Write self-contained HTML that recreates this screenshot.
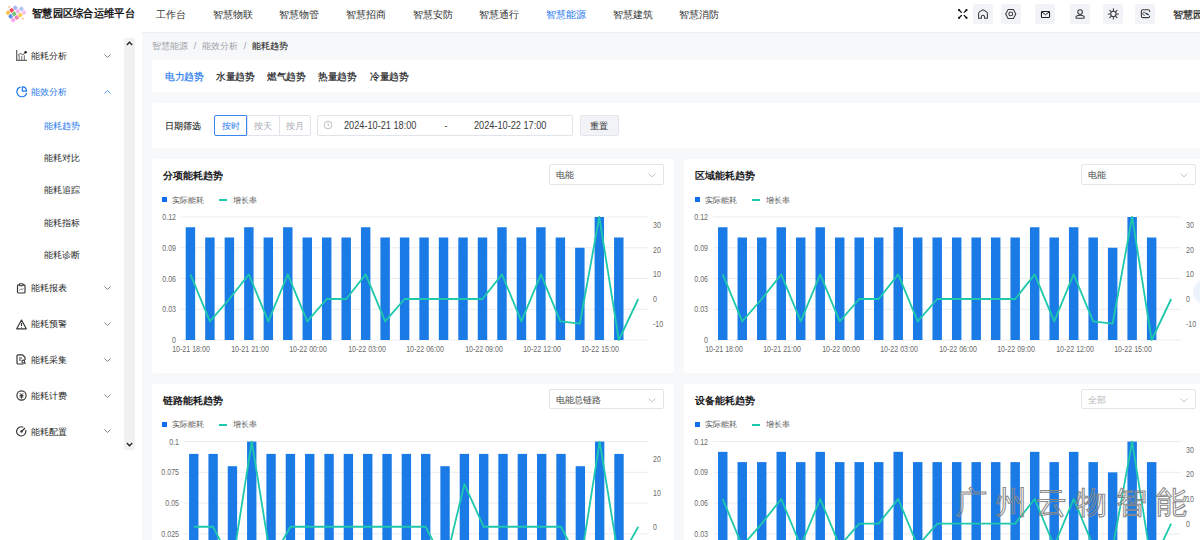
<!DOCTYPE html><html><head><meta charset="utf-8"><style>
*{box-sizing:border-box;margin:0;padding:0}
html,body{width:1200px;height:540px;overflow:hidden;background:#fff;font-family:"Liberation Sans", sans-serif;position:relative}
.abs{position:absolute}
.hdr{position:absolute;left:0;top:0;width:1200px;height:32px;background:#fff}
.main{position:absolute;left:142px;top:32px;width:1058px;height:508px;background:#f7f8fa}
.shadow{position:absolute;left:142px;top:32px;width:1058px;height:2px;background:linear-gradient(#e9ebef,#f7f8fa)}
.nav{position:absolute;top:8.6px;font-size:9.8px;line-height:12px;color:#333;white-space:nowrap}
.ibox{position:absolute;top:4px;width:20px;height:20px;background:#f2f3f7;border-radius:3px}

.side{position:absolute;font-size:9px;line-height:10px;color:#262626;white-space:nowrap}
.card{position:absolute;background:#fff;border-radius:3px}
.ctitle{position:absolute;font-size:10.35px;line-height:13px;font-weight:bold;color:#1d1d1f;white-space:nowrap}
.sel{position:absolute;height:20.6px;border:1px solid #e3e5ea;border-radius:2px;background:#fff}
.sel span{position:absolute;left:6px;top:5px;font-size:9px;line-height:10px;color:#444}
.sel.dis{background:#fff}
.sel.dis span{color:#b4b6ba}
.chev{position:absolute;right:7.2px;top:8.3px}
.leg{position:absolute;font-size:8px;line-height:10px;color:#5a5a5a;white-space:nowrap}
.ax{position:absolute;font-size:8.5px;line-height:10px;color:#6b6b6b;white-space:nowrap;transform:scaleX(0.83);transform-origin:0 50%}
.axl{width:60px;text-align:right;transform-origin:100% 50%}
.axc{width:60px;text-align:center;transform-origin:50% 50%}
</style></head><body>
<div class="hdr"></div>
<svg class="abs" style="left:0;top:0" width="30" height="30" viewBox="0 0 30 30"><g transform="translate(14.2 13.9) rotate(-35)"><rect x="-6.300000000000001" y="-6.300000000000001" width="3.8" height="3.8" rx="0.9" fill="#f8c24e"/><rect x="-1.9" y="-6.300000000000001" width="3.8" height="3.8" rx="0.9" fill="#f0505e"/><rect x="2.5000000000000004" y="-6.300000000000001" width="3.8" height="3.8" rx="0.9" fill="#a9b4f0"/><rect x="-6.300000000000001" y="-1.9" width="3.8" height="3.8" rx="0.9" fill="#5f8ee6"/><rect x="-1.9" y="-1.9" width="3.8" height="3.8" rx="0.9" fill="#72c672"/><rect x="2.5000000000000004" y="-1.9" width="3.8" height="3.8" rx="0.9" fill="#f2b0ee"/><rect x="-6.300000000000001" y="2.5000000000000004" width="3.8" height="3.8" rx="0.9" fill="#f6a9ea"/><rect x="-1.9" y="2.5000000000000004" width="3.8" height="3.8" rx="0.9" fill="#ef84b4"/><rect x="2.5000000000000004" y="2.5000000000000004" width="3.8" height="3.8" rx="0.9" fill="#f7cc55"/><rect x="6.9" y="-1.9" width="3.8" height="3.8" rx="0.9" fill="#b0c4f2"/><rect x="6.9" y="2.5000000000000004" width="3.8" height="3.8" rx="0.9" fill="#f6c0f0"/><circle cx="0" cy="-8.6" r="1" fill="#f6c48a"/><circle cx="4.4" cy="8.8" r="1" fill="#f6c48a"/></g></svg>
<div class="abs" style="left:32px;top:7px;font-size:11px;line-height:12px;font-weight:bold;color:#1a1a1a;white-space:nowrap;transform:scaleX(0.935);transform-origin:0 0">智慧园区综合运维平台</div>
<div class="nav" style="left:156.0px;color:#333">工作台</div>
<div class="nav" style="left:212.7px;color:#333">智慧物联</div>
<div class="nav" style="left:279.2px;color:#333">智慧物管</div>
<div class="nav" style="left:346.0px;color:#333">智慧招商</div>
<div class="nav" style="left:412.7px;color:#333">智慧安防</div>
<div class="nav" style="left:479.2px;color:#333">智慧通行</div>
<div class="nav" style="left:546.0px;color:#1f78ee">智慧能源</div>
<div class="nav" style="left:612.7px;color:#333">智慧建筑</div>
<div class="nav" style="left:679.2px;color:#333">智慧消防</div>
<div class="ibox" style="left:972.6px"></div>
<div class="ibox" style="left:1001px"></div>
<div class="ibox" style="left:1035.3px"></div>
<div class="ibox" style="left:1070px"></div>
<div class="ibox" style="left:1103px"></div>
<div class="ibox" style="left:1135.2px"></div>
<svg class="abs" style="left:0;top:0" width="1200" height="32" viewBox="0 0 1200 32"><g stroke="#111" stroke-width="1.3" stroke-linecap="round" fill="none"><path d="M959 10 L961.4 12.4 M966.6 10 L964.2 12.4 M959 17.9 L961.4 15.5 M966.6 17.9 L964.2 15.5"/></g><g fill="#111"><circle cx="959.1" cy="10.1" r="1.1"/><circle cx="966.5" cy="10.1" r="1.1"/><circle cx="959.1" cy="17.8" r="1.1"/><circle cx="966.5" cy="17.8" r="1.1"/></g><path d="M978.6 18.3 V13.6 Q978.6 12.6 979.5 11.9 L982.3 10.1 Q983 9.7 983.7 10.1 L986.5 11.9 Q987.4 12.6 987.4 13.6 V18.3 H984.6 V16.9 A1.6 1.6 0 0 0 981.4 16.9 V18.3 Z" fill="none" stroke="#3a3a3a" stroke-width="1.05" stroke-linejoin="round"/><path d="M1005.7 13.9 L1008.1 9.4 H1013.4 L1015.8 13.9 L1013.4 18.4 H1008.1 Z" fill="none" stroke="#3a3a3a" stroke-width="1.05" stroke-linejoin="round"/><circle cx="1010.75" cy="13.9" r="1.9" fill="none" stroke="#3a3a3a" stroke-width="1.05"/><rect x="1041.45" y="11.55" width="8.1" height="6" rx="0.9" fill="none" stroke="#222" stroke-width="1.1"/><path d="M1041.7 11.9 L1045.5 14.7 L1049.3 11.9" fill="none" stroke="#222" stroke-width="1"/><circle cx="1080.1" cy="12.1" r="2.3" fill="none" stroke="#3a3a3a" stroke-width="1.05"/><path d="M1075.9 17.6 C1075.9 15.9 1077.8 15.3 1080.1 15.3 C1082.4 15.3 1084.3 15.9 1084.3 17.6 C1084.3 18.2 1083.9 18.3 1083.3 18.3 H1076.9 C1076.3 18.3 1075.9 18.2 1075.9 17.6 Z" fill="none" stroke="#3a3a3a" stroke-width="1.05" stroke-linejoin="round"/><circle cx="1113.4" cy="14" r="2.7" fill="none" stroke="#3a3a3a" stroke-width="1.1"/><path d="M1117.00 14.00 L1118.50 14.00 M1115.95 16.55 L1117.01 17.61 M1113.40 17.60 L1113.40 19.10 M1110.85 16.55 L1109.79 17.61 M1109.80 14.00 L1108.30 14.00 M1110.85 11.45 L1109.79 10.39 M1113.40 10.40 L1113.40 8.90 M1115.95 11.45 L1117.01 10.39 " stroke="#3a3a3a" stroke-width="1.1" stroke-linecap="round"/><path d="M1149.6 12 V11.2 Q1149.6 9.8 1148.2 9.8 H1142.8 Q1141.4 9.8 1141.4 11.2 V16.2 Q1141.4 17.6 1142.8 17.6 H1148.2 Q1149.6 17.6 1149.6 16.2 V15.8" fill="none" stroke="#3a3a3a" stroke-width="1.1"/><path d="M1144.9 12.4 A1.5 1.5 0 1 0 1144.9 15.1" fill="none" stroke="#3a3a3a" stroke-width="0.9"/><path d="M1145.8 13.2 L1148.2 14.6" stroke="#1a2a4a" stroke-width="1.3" stroke-linecap="round"/></svg>
<div class="nav" style="left:1172.5px;top:9px;font-size:9.5px;color:#1a1a1a;-webkit-text-stroke:0.2px #1a1a1a">智慧园区</div>
<svg class="abs" style="left:16px;top:50.449999999999996px" width="12" height="12" viewBox="0 0 12 12"><path d="M0.7 0 V10.3 H11" fill="none" stroke="#666" stroke-width="1.3"/><path d="M3.2 10 V5.3 M5.7 10 V6 M8.4 10 V5.2" stroke="#888" stroke-width="1.2"/><path d="M2 5.3 L4.4 3.4 L6.8 4.8 L9.6 2.3" fill="none" stroke="#555" stroke-width="1"/><circle cx="9.6" cy="2.3" r="1.2" fill="#222"/></svg>
<div class="side" style="left:31px;top:51.05px;color:#262626">能耗分析</div>
<svg class="abs" style="left:104.3px;top:53.75px" width="7" height="4" viewBox="0 0 7 4"><path d="M0.5 0.5 L3.5 3.5 L6.5 0.5" fill="none" stroke="#777" stroke-width="0.9"/></svg>
<svg class="abs" style="left:16px;top:86.30000000000001px" width="12" height="12" viewBox="0 0 12 12"><path d="M4.6 1.1 A4.9 4.9 0 1 0 10.6 6.9" fill="none" stroke="#1f78ee" stroke-width="1.2"/><path d="M6.3 0.9 V5.1 H10.6 A4.4 4.4 0 0 0 6.3 0.9 Z" fill="none" stroke="#1f78ee" stroke-width="1.2" stroke-linejoin="round"/></svg>
<div class="side" style="left:31px;top:86.9px;color:#1f78ee">能效分析</div>
<svg class="abs" style="left:104.3px;top:89.60000000000001px" width="7" height="4" viewBox="0 0 7 4"><path d="M0.5 3.5 L3.5 0.5 L6.5 3.5" fill="none" stroke="#4a90f2" stroke-width="0.9"/></svg>
<svg class="abs" style="left:16px;top:282.79999999999995px" width="12" height="12" viewBox="0 0 12 12"><rect x="1.5" y="1.8" width="7.5" height="8.2" rx="1" fill="none" stroke="#333" stroke-width="1.15"/><rect x="3.5" y="0.7" width="3.5" height="2" rx="0.5" fill="#fff" stroke="#333" stroke-width="1.05"/><path d="M3.5 7.5 L5 5.8 L6.2 6.8 L7.3 5.3" fill="none" stroke="#666" stroke-width="0.8"/></svg>
<div class="side" style="left:31px;top:283.4px;color:#262626">能耗报表</div>
<svg class="abs" style="left:104.3px;top:286.09999999999997px" width="7" height="4" viewBox="0 0 7 4"><path d="M0.5 0.5 L3.5 3.5 L6.5 0.5" fill="none" stroke="#777" stroke-width="0.9"/></svg>
<svg class="abs" style="left:16px;top:318.59999999999997px" width="12" height="12" viewBox="0 0 12 12"><path d="M5.5 1 L10.3 9.8 H0.7 Z" fill="none" stroke="#333" stroke-width="1.15" stroke-linejoin="round"/><path d="M5.5 4 V7" stroke="#333" stroke-width="1.15"/><circle cx="5.5" cy="8.3" r="0.5" fill="#333"/></svg>
<div class="side" style="left:31px;top:319.2px;color:#262626">能耗预警</div>
<svg class="abs" style="left:104.3px;top:321.9px" width="7" height="4" viewBox="0 0 7 4"><path d="M0.5 0.5 L3.5 3.5 L6.5 0.5" fill="none" stroke="#777" stroke-width="0.9"/></svg>
<svg class="abs" style="left:16px;top:354.4px" width="12" height="12" viewBox="0 0 12 12"><path d="M7.5 10 H2 a1 1 0 0 1 -1 -1 V1.8 a1 1 0 0 1 1 -1 H6.5 L9 3.3 V6" fill="none" stroke="#333" stroke-width="1.15"/><path d="M3 4 H6 M3 6 H5" stroke="#333" stroke-width="1"/><circle cx="7.3" cy="7.5" r="1.4" fill="none" stroke="#333" stroke-width="1.05"/><path d="M8.3 8.5 L9.6 9.8" stroke="#333" stroke-width="1.15"/></svg>
<div class="side" style="left:31px;top:355.0px;color:#262626">能耗采集</div>
<svg class="abs" style="left:104.3px;top:357.7px" width="7" height="4" viewBox="0 0 7 4"><path d="M0.5 0.5 L3.5 3.5 L6.5 0.5" fill="none" stroke="#777" stroke-width="0.9"/></svg>
<svg class="abs" style="left:16px;top:390.2px" width="12" height="12" viewBox="0 0 12 12"><circle cx="5.5" cy="5.5" r="4.6" fill="none" stroke="#333" stroke-width="1.15"/><path d="M3.8 3.2 L5.5 5 L7.2 3.2 M3.6 5.4 H7.4 M3.6 6.9 H7.4 M5.5 5 V8.6" fill="none" stroke="#333" stroke-width="1"/></svg>
<div class="side" style="left:31px;top:390.8px;color:#262626">能耗计费</div>
<svg class="abs" style="left:104.3px;top:393.5px" width="7" height="4" viewBox="0 0 7 4"><path d="M0.5 0.5 L3.5 3.5 L6.5 0.5" fill="none" stroke="#777" stroke-width="0.9"/></svg>
<svg class="abs" style="left:16px;top:426.0px" width="12" height="12" viewBox="0 0 12 12"><path d="M9.6 4 A4.6 4.6 0 1 1 7.3 1.3" fill="none" stroke="#333" stroke-width="1.15"/><path d="M5.5 5.5 L9 2" stroke="#333" stroke-width="1.15"/><circle cx="5.5" cy="5.5" r="1.2" fill="#333"/></svg>
<div class="side" style="left:31px;top:426.6px;color:#262626">能耗配置</div>
<svg class="abs" style="left:104.3px;top:429.3px" width="7" height="4" viewBox="0 0 7 4"><path d="M0.5 0.5 L3.5 3.5 L6.5 0.5" fill="none" stroke="#777" stroke-width="0.9"/></svg>
<div class="side" style="left:44.4px;top:120.9px;color:#1f78ee">能耗趋势</div>
<div class="side" style="left:44.4px;top:153.1px;color:#262626">能耗对比</div>
<div class="side" style="left:44.4px;top:185.3px;color:#262626">能耗追踪</div>
<div class="side" style="left:44.4px;top:217.5px;color:#262626">能耗指标</div>
<div class="side" style="left:44.4px;top:249.7px;color:#262626">能耗诊断</div>
<div class="abs" style="left:124.4px;top:38.3px;width:10.4px;height:411.5px;background:#f1f1f1"></div>
<svg class="abs" style="left:126px;top:40.7px" width="7" height="5" viewBox="0 0 7 5"><path d="M0.8 4 L3.5 1.2 L6.2 4" fill="none" stroke="#222" stroke-width="1.3"/></svg>
<svg class="abs" style="left:126px;top:441.5px" width="7" height="5" viewBox="0 0 7 5"><path d="M0.8 1 L3.5 3.8 L6.2 1" fill="none" stroke="#222" stroke-width="1.3"/></svg>
<div class="main"></div><div class="shadow"></div>
<div class="abs" style="left:152px;top:41px;font-size:9px;line-height:10px;color:#9a9ea6;white-space:nowrap">智慧能源<span style="margin:0 5.6px 0 5.8px">/</span>能效分析<span style="margin:0 5.6px 0 5.8px">/</span><span style="color:#222;-webkit-text-stroke:0.1px #222">能耗趋势</span></div>
<div class="card" style="left:151.5px;top:60.2px;width:1055px;height:32px"></div>
<div class="abs" style="left:164.5px;top:71px;font-size:10px;line-height:12px;color:#1f78ee;-webkit-text-stroke:0.2px #1f78ee;transform:scaleX(0.965);transform-origin:0 0;white-space:nowrap">电力趋势</div>
<div class="abs" style="left:215.75px;top:71px;font-size:10px;line-height:12px;color:#1d1d1f;-webkit-text-stroke:0.2px #1d1d1f;transform:scaleX(0.965);transform-origin:0 0;white-space:nowrap">水量趋势</div>
<div class="abs" style="left:267.0px;top:71px;font-size:10px;line-height:12px;color:#1d1d1f;-webkit-text-stroke:0.2px #1d1d1f;transform:scaleX(0.965);transform-origin:0 0;white-space:nowrap">燃气趋势</div>
<div class="abs" style="left:318.25px;top:71px;font-size:10px;line-height:12px;color:#1d1d1f;-webkit-text-stroke:0.2px #1d1d1f;transform:scaleX(0.965);transform-origin:0 0;white-space:nowrap">热量趋势</div>
<div class="abs" style="left:369.5px;top:71px;font-size:10px;line-height:12px;color:#1d1d1f;-webkit-text-stroke:0.2px #1d1d1f;transform:scaleX(0.965);transform-origin:0 0;white-space:nowrap">冷量趋势</div>
<div class="card" style="left:151.5px;top:102.5px;width:1055px;height:45.5px"></div>
<div class="abs" style="left:164.8px;top:120.8px;font-size:9px;line-height:10px;color:#222;-webkit-text-stroke:0.12px #222;white-space:nowrap">日期筛选</div>
<div class="abs" style="left:247px;top:115.2px;width:63.5px;height:20.5px;border:1px solid #e1e4ea;border-radius:0 2px 2px 0"></div>
<div class="abs" style="left:278.5px;top:115.2px;width:1px;height:20.5px;background:#e1e4ea"></div>
<div class="abs" style="left:214.3px;top:115.2px;width:32.9px;height:20.5px;border:1px solid #3a85f0;border-radius:2px 0 0 2px"></div>
<div class="abs" style="left:222px;top:120.5px;font-size:9px;line-height:10px;color:#1f78ee;white-space:nowrap">按时</div>
<div class="abs" style="left:254px;top:120.5px;font-size:9px;line-height:10px;color:#a8acb3;white-space:nowrap">按天</div>
<div class="abs" style="left:285.5px;top:120.5px;font-size:9px;line-height:10px;color:#a8acb3;white-space:nowrap">按月</div>
<div class="abs" style="left:317.3px;top:115.1px;width:256px;height:20.6px;border:1px solid #e1e4ea;border-radius:2px"></div>
<svg class="abs" style="left:323px;top:120px" width="10" height="10" viewBox="0 0 10 10"><circle cx="5" cy="5" r="3.8" fill="none" stroke="#b5b9c0" stroke-width="0.9"/><path d="M5 2.8 V5 L6.5 6.2" fill="none" stroke="#b5b9c0" stroke-width="0.9"/></svg>
<div class="abs" style="left:344.2px;top:121px;font-size:10.2px;line-height:10px;color:#3a3a3a;white-space:nowrap;transform:scaleX(0.9);transform-origin:0 50%">2024-10-21 18:00</div>
<div class="abs" style="left:444.5px;top:121px;font-size:9.3px;line-height:10px;color:#333;white-space:nowrap">-</div>
<div class="abs" style="left:474.1px;top:121px;font-size:10.2px;line-height:10px;color:#3a3a3a;white-space:nowrap;transform:scaleX(0.9);transform-origin:0 50%">2024-10-22 17:00</div>
<div class="abs" style="left:580px;top:115.1px;width:38.5px;height:20.6px;border:1px solid #e4e6ec;border-radius:2px;background:#f2f3f7"></div>
<div class="abs" style="left:590px;top:121.2px;font-size:9px;line-height:10px;color:#333;white-space:nowrap">重置</div>
<div class="card" style="left:151.5px;top:158.9px;width:522.5px;height:214px"></div>
<div class="ctitle" style="left:162.5px;top:168.9px">分项能耗趋势</div>
<div class="sel" style="left:548.9px;top:164.0px;width:115.2px"><span>电能</span><svg class="chev" width="8" height="5" viewBox="0 0 8 5"><path d="M0.6 0.6 L4 3.9 L7.4 0.6" fill="none" stroke="#b8bcc4" stroke-width="0.9"/></svg></div>
<div style="position:absolute;left:162.1px;top:197.10000000000002px;width:5px;height:5px;background:#0d6ef0"></div>
<div class="leg" style="left:172.3px;top:195.8px">实际能耗</div>
<div style="position:absolute;left:219.0px;top:198.9px;width:8px;height:2px;background:#1ec8ac"></div>
<div class="leg" style="left:232.9px;top:195.8px">增长率</div>
<svg style="position:absolute;left:0;top:0" width="1200" height="540" viewBox="0 0 1200 540"><line x1="180.7" y1="217.00" x2="648.0" y2="217.00" stroke="#ececf0" stroke-width="1"/><line x1="180.7" y1="247.75" x2="648.0" y2="247.75" stroke="#ececf0" stroke-width="1"/><line x1="180.7" y1="278.50" x2="648.0" y2="278.50" stroke="#ececf0" stroke-width="1"/><line x1="180.7" y1="309.25" x2="648.0" y2="309.25" stroke="#ececf0" stroke-width="1"/><line x1="180.7" y1="340.00" x2="648.0" y2="340.00" stroke="#ececf0" stroke-width="1"/><rect x="185.71" y="227.25" width="9.44" height="112.75" fill="#1a7be6"/><rect x="205.18" y="237.50" width="9.44" height="102.50" fill="#1a7be6"/><rect x="224.66" y="237.50" width="9.44" height="102.50" fill="#1a7be6"/><rect x="244.13" y="227.25" width="9.44" height="112.75" fill="#1a7be6"/><rect x="263.60" y="237.50" width="9.44" height="102.50" fill="#1a7be6"/><rect x="283.07" y="227.25" width="9.44" height="112.75" fill="#1a7be6"/><rect x="302.54" y="237.50" width="9.44" height="102.50" fill="#1a7be6"/><rect x="322.01" y="237.50" width="9.44" height="102.50" fill="#1a7be6"/><rect x="341.48" y="237.50" width="9.44" height="102.50" fill="#1a7be6"/><rect x="360.95" y="227.25" width="9.44" height="112.75" fill="#1a7be6"/><rect x="380.42" y="237.50" width="9.44" height="102.50" fill="#1a7be6"/><rect x="399.89" y="237.50" width="9.44" height="102.50" fill="#1a7be6"/><rect x="419.36" y="237.50" width="9.44" height="102.50" fill="#1a7be6"/><rect x="438.83" y="237.50" width="9.44" height="102.50" fill="#1a7be6"/><rect x="458.31" y="237.50" width="9.44" height="102.50" fill="#1a7be6"/><rect x="477.78" y="237.50" width="9.44" height="102.50" fill="#1a7be6"/><rect x="497.25" y="227.25" width="9.44" height="112.75" fill="#1a7be6"/><rect x="516.72" y="237.50" width="9.44" height="102.50" fill="#1a7be6"/><rect x="536.19" y="227.25" width="9.44" height="112.75" fill="#1a7be6"/><rect x="555.66" y="237.50" width="9.44" height="102.50" fill="#1a7be6"/><rect x="575.13" y="247.75" width="9.44" height="92.25" fill="#1a7be6"/><rect x="594.60" y="217.00" width="9.44" height="123.00" fill="#1a7be6"/><rect x="614.07" y="237.50" width="9.44" height="102.50" fill="#1a7be6"/><polyline points="190.44,274.39 209.91,321.35 229.38,298.99 248.85,274.39 268.32,321.35 287.79,274.39 307.26,321.35 326.73,298.99 346.20,298.99 365.67,274.39 385.14,321.35 404.61,298.99 424.09,298.99 443.56,298.99 463.03,298.99 482.50,298.99 501.97,274.39 521.44,321.35 540.91,274.39 560.38,321.35 579.85,323.59 599.32,217.00 618.79,340.00 638.26,298.99" fill="none" stroke="#1ec8ac" stroke-width="1.8" stroke-linejoin="round"/></svg>
<div class="ax axl" style="left:115.69999999999999px;top:335.00px">0</div>
<div class="ax axl" style="left:115.69999999999999px;top:304.25px">0.03</div>
<div class="ax axl" style="left:115.69999999999999px;top:273.50px">0.06</div>
<div class="ax axl" style="left:115.69999999999999px;top:242.75px">0.09</div>
<div class="ax axl" style="left:115.69999999999999px;top:212.00px">0.12</div>
<div class="ax" style="left:653.3px;top:318.59px">-10</div>
<div class="ax" style="left:653.3px;top:293.99px">0</div>
<div class="ax" style="left:653.3px;top:269.39px">10</div>
<div class="ax" style="left:653.3px;top:244.79px">20</div>
<div class="ax" style="left:653.3px;top:220.19px">30</div>
<div class="ax axc" style="left:161.44px;top:344.20px">10-21 18:00</div>
<div class="ax axc" style="left:219.85px;top:344.20px">10-21 21:00</div>
<div class="ax axc" style="left:278.26px;top:344.20px">10-22 00:00</div>
<div class="ax axc" style="left:336.67px;top:344.20px">10-22 03:00</div>
<div class="ax axc" style="left:395.09px;top:344.20px">10-22 06:00</div>
<div class="ax axc" style="left:453.50px;top:344.20px">10-22 09:00</div>
<div class="ax axc" style="left:511.91px;top:344.20px">10-22 12:00</div>
<div class="ax axc" style="left:570.32px;top:344.20px">10-22 15:00</div>
<div class="card" style="left:684.4px;top:158.9px;width:522.5px;height:214px"></div>
<div class="ctitle" style="left:695.4px;top:168.9px">区域能耗趋势</div>
<div class="sel" style="left:1080.8px;top:164.0px;width:115.6px"><span>电能</span><svg class="chev" width="8" height="5" viewBox="0 0 8 5"><path d="M0.6 0.6 L4 3.9 L7.4 0.6" fill="none" stroke="#b8bcc4" stroke-width="0.9"/></svg></div>
<div style="position:absolute;left:695.0px;top:197.10000000000002px;width:5px;height:5px;background:#0d6ef0"></div>
<div class="leg" style="left:705.1999999999999px;top:195.8px">实际能耗</div>
<div style="position:absolute;left:751.9px;top:198.9px;width:8px;height:2px;background:#1ec8ac"></div>
<div class="leg" style="left:765.8px;top:195.8px">增长率</div>
<svg style="position:absolute;left:0;top:0" width="1200" height="540" viewBox="0 0 1200 540"><line x1="713.0" y1="217.00" x2="1180.9" y2="217.00" stroke="#ececf0" stroke-width="1"/><line x1="713.0" y1="247.75" x2="1180.9" y2="247.75" stroke="#ececf0" stroke-width="1"/><line x1="713.0" y1="278.50" x2="1180.9" y2="278.50" stroke="#ececf0" stroke-width="1"/><line x1="713.0" y1="309.25" x2="1180.9" y2="309.25" stroke="#ececf0" stroke-width="1"/><line x1="713.0" y1="340.00" x2="1180.9" y2="340.00" stroke="#ececf0" stroke-width="1"/><rect x="718.02" y="227.25" width="9.46" height="112.75" fill="#1a7be6"/><rect x="737.52" y="237.50" width="9.46" height="102.50" fill="#1a7be6"/><rect x="757.01" y="237.50" width="9.46" height="102.50" fill="#1a7be6"/><rect x="776.51" y="227.25" width="9.46" height="112.75" fill="#1a7be6"/><rect x="796.00" y="237.50" width="9.46" height="102.50" fill="#1a7be6"/><rect x="815.50" y="227.25" width="9.46" height="112.75" fill="#1a7be6"/><rect x="835.00" y="237.50" width="9.46" height="102.50" fill="#1a7be6"/><rect x="854.49" y="237.50" width="9.46" height="102.50" fill="#1a7be6"/><rect x="873.99" y="237.50" width="9.46" height="102.50" fill="#1a7be6"/><rect x="893.48" y="227.25" width="9.46" height="112.75" fill="#1a7be6"/><rect x="912.98" y="237.50" width="9.46" height="102.50" fill="#1a7be6"/><rect x="932.47" y="237.50" width="9.46" height="102.50" fill="#1a7be6"/><rect x="951.97" y="237.50" width="9.46" height="102.50" fill="#1a7be6"/><rect x="971.47" y="237.50" width="9.46" height="102.50" fill="#1a7be6"/><rect x="990.96" y="237.50" width="9.46" height="102.50" fill="#1a7be6"/><rect x="1010.46" y="237.50" width="9.46" height="102.50" fill="#1a7be6"/><rect x="1029.95" y="227.25" width="9.46" height="112.75" fill="#1a7be6"/><rect x="1049.45" y="237.50" width="9.46" height="102.50" fill="#1a7be6"/><rect x="1068.95" y="227.25" width="9.46" height="112.75" fill="#1a7be6"/><rect x="1088.44" y="237.50" width="9.46" height="102.50" fill="#1a7be6"/><rect x="1107.94" y="247.75" width="9.46" height="92.25" fill="#1a7be6"/><rect x="1127.43" y="217.00" width="9.46" height="123.00" fill="#1a7be6"/><rect x="1146.93" y="237.50" width="9.46" height="102.50" fill="#1a7be6"/><polyline points="722.75,274.39 742.24,321.35 761.74,298.99 781.24,274.39 800.73,321.35 820.23,274.39 839.72,321.35 859.22,298.99 878.71,298.99 898.21,274.39 917.71,321.35 937.20,298.99 956.70,298.99 976.19,298.99 995.69,298.99 1015.19,298.99 1034.68,274.39 1054.18,321.35 1073.67,274.39 1093.17,321.35 1112.66,323.59 1132.16,217.00 1151.66,340.00 1171.15,298.99" fill="none" stroke="#1ec8ac" stroke-width="1.8" stroke-linejoin="round"/></svg>
<div class="ax axl" style="left:648.0px;top:335.00px">0</div>
<div class="ax axl" style="left:648.0px;top:304.25px">0.03</div>
<div class="ax axl" style="left:648.0px;top:273.50px">0.06</div>
<div class="ax axl" style="left:648.0px;top:242.75px">0.09</div>
<div class="ax axl" style="left:648.0px;top:212.00px">0.12</div>
<div class="ax" style="left:1186.2px;top:318.59px">-10</div>
<div class="ax" style="left:1186.2px;top:293.99px">0</div>
<div class="ax" style="left:1186.2px;top:269.39px">10</div>
<div class="ax" style="left:1186.2px;top:244.79px">20</div>
<div class="ax" style="left:1186.2px;top:220.19px">30</div>
<div class="ax axc" style="left:693.75px;top:344.20px">10-21 18:00</div>
<div class="ax axc" style="left:752.24px;top:344.20px">10-21 21:00</div>
<div class="ax axc" style="left:810.72px;top:344.20px">10-22 00:00</div>
<div class="ax axc" style="left:869.21px;top:344.20px">10-22 03:00</div>
<div class="ax axc" style="left:927.70px;top:344.20px">10-22 06:00</div>
<div class="ax axc" style="left:986.19px;top:344.20px">10-22 09:00</div>
<div class="ax axc" style="left:1044.67px;top:344.20px">10-22 12:00</div>
<div class="ax axc" style="left:1103.16px;top:344.20px">10-22 15:00</div>
<div class="card" style="left:151.5px;top:383.5px;width:522.5px;height:214px"></div>
<div class="ctitle" style="left:162.5px;top:393.5px">链路能耗趋势</div>
<div class="sel" style="left:548.9px;top:388.6px;width:115.2px"><span>电能总链路</span><svg class="chev" width="8" height="5" viewBox="0 0 8 5"><path d="M0.6 0.6 L4 3.9 L7.4 0.6" fill="none" stroke="#b8bcc4" stroke-width="0.9"/></svg></div>
<div style="position:absolute;left:162.1px;top:421.7px;width:5px;height:5px;background:#0d6ef0"></div>
<div class="leg" style="left:172.3px;top:420.4px">实际能耗</div>
<div style="position:absolute;left:219.0px;top:423.5px;width:8px;height:2px;background:#1ec8ac"></div>
<div class="leg" style="left:232.9px;top:420.4px">增长率</div>
<svg style="position:absolute;left:0;top:0" width="1200" height="540" viewBox="0 0 1200 540"><line x1="184.1" y1="441.60" x2="648.0" y2="441.60" stroke="#ececf0" stroke-width="1"/><line x1="184.1" y1="472.35" x2="648.0" y2="472.35" stroke="#ececf0" stroke-width="1"/><line x1="184.1" y1="503.10" x2="648.0" y2="503.10" stroke="#ececf0" stroke-width="1"/><line x1="184.1" y1="533.85" x2="648.0" y2="533.85" stroke="#ececf0" stroke-width="1"/><line x1="184.1" y1="564.60" x2="648.0" y2="564.60" stroke="#ececf0" stroke-width="1"/><rect x="189.08" y="453.90" width="9.37" height="110.70" fill="#1a7be6"/><rect x="208.41" y="453.90" width="9.37" height="110.70" fill="#1a7be6"/><rect x="227.74" y="466.20" width="9.37" height="98.40" fill="#1a7be6"/><rect x="247.06" y="441.60" width="9.37" height="123.00" fill="#1a7be6"/><rect x="266.39" y="453.90" width="9.37" height="110.70" fill="#1a7be6"/><rect x="285.72" y="453.90" width="9.37" height="110.70" fill="#1a7be6"/><rect x="305.05" y="453.90" width="9.37" height="110.70" fill="#1a7be6"/><rect x="324.38" y="453.90" width="9.37" height="110.70" fill="#1a7be6"/><rect x="343.71" y="453.90" width="9.37" height="110.70" fill="#1a7be6"/><rect x="363.04" y="453.90" width="9.37" height="110.70" fill="#1a7be6"/><rect x="382.37" y="453.90" width="9.37" height="110.70" fill="#1a7be6"/><rect x="401.70" y="453.90" width="9.37" height="110.70" fill="#1a7be6"/><rect x="421.03" y="453.90" width="9.37" height="110.70" fill="#1a7be6"/><rect x="440.36" y="466.20" width="9.37" height="98.40" fill="#1a7be6"/><rect x="459.69" y="453.90" width="9.37" height="110.70" fill="#1a7be6"/><rect x="479.01" y="453.90" width="9.37" height="110.70" fill="#1a7be6"/><rect x="498.34" y="453.90" width="9.37" height="110.70" fill="#1a7be6"/><rect x="517.67" y="453.90" width="9.37" height="110.70" fill="#1a7be6"/><rect x="537.00" y="453.90" width="9.37" height="110.70" fill="#1a7be6"/><rect x="556.33" y="453.90" width="9.37" height="110.70" fill="#1a7be6"/><rect x="575.66" y="466.20" width="9.37" height="98.40" fill="#1a7be6"/><rect x="594.99" y="441.60" width="9.37" height="123.00" fill="#1a7be6"/><rect x="614.32" y="453.90" width="9.37" height="110.70" fill="#1a7be6"/><polyline points="193.76,526.76 213.09,526.76 232.42,564.60 251.75,441.60 271.08,560.82 290.41,526.76 309.74,526.76 329.07,526.76 348.40,526.76 367.73,526.76 387.06,526.76 406.39,526.76 425.71,526.76 445.04,564.60 464.37,484.18 483.70,526.76 503.03,526.76 522.36,526.76 541.69,526.76 561.02,526.76 580.35,564.60 599.68,441.60 619.01,560.82 638.34,526.76" fill="none" stroke="#1ec8ac" stroke-width="1.8" stroke-linejoin="round"/></svg>
<div class="ax axl" style="left:119.1px;top:559.60px">0</div>
<div class="ax axl" style="left:119.1px;top:528.85px">0.025</div>
<div class="ax axl" style="left:119.1px;top:498.10px">0.05</div>
<div class="ax axl" style="left:119.1px;top:467.35px">0.075</div>
<div class="ax axl" style="left:119.1px;top:436.60px">0.1</div>
<div class="ax" style="left:653.3px;top:555.82px">-10</div>
<div class="ax" style="left:653.3px;top:521.76px">0</div>
<div class="ax" style="left:653.3px;top:487.69px">10</div>
<div class="ax" style="left:653.3px;top:453.63px">20</div>
<div class="ax axc" style="left:164.76px;top:568.80px">10-21 18:00</div>
<div class="ax axc" style="left:222.75px;top:568.80px">10-21 21:00</div>
<div class="ax axc" style="left:280.74px;top:568.80px">10-22 00:00</div>
<div class="ax axc" style="left:338.73px;top:568.80px">10-22 03:00</div>
<div class="ax axc" style="left:396.71px;top:568.80px">10-22 06:00</div>
<div class="ax axc" style="left:454.70px;top:568.80px">10-22 09:00</div>
<div class="ax axc" style="left:512.69px;top:568.80px">10-22 12:00</div>
<div class="ax axc" style="left:570.68px;top:568.80px">10-22 15:00</div>
<div class="card" style="left:684.4px;top:383.5px;width:522.5px;height:214px"></div>
<div class="ctitle" style="left:695.4px;top:393.5px">设备能耗趋势</div>
<div class="sel dis" style="left:1080.8px;top:388.6px;width:115.6px"><span>全部</span><svg class="chev" width="8" height="5" viewBox="0 0 8 5"><path d="M0.6 0.6 L4 3.9 L7.4 0.6" fill="none" stroke="#b8bcc4" stroke-width="0.9"/></svg></div>
<div style="position:absolute;left:695.0px;top:421.7px;width:5px;height:5px;background:#0d6ef0"></div>
<div class="leg" style="left:705.1999999999999px;top:420.4px">实际能耗</div>
<div style="position:absolute;left:751.9px;top:423.5px;width:8px;height:2px;background:#1ec8ac"></div>
<div class="leg" style="left:765.8px;top:420.4px">增长率</div>
<svg style="position:absolute;left:0;top:0" width="1200" height="540" viewBox="0 0 1200 540"><line x1="713.0" y1="441.60" x2="1180.9" y2="441.60" stroke="#ececf0" stroke-width="1"/><line x1="713.0" y1="472.35" x2="1180.9" y2="472.35" stroke="#ececf0" stroke-width="1"/><line x1="713.0" y1="503.10" x2="1180.9" y2="503.10" stroke="#ececf0" stroke-width="1"/><line x1="713.0" y1="533.85" x2="1180.9" y2="533.85" stroke="#ececf0" stroke-width="1"/><line x1="713.0" y1="564.60" x2="1180.9" y2="564.60" stroke="#ececf0" stroke-width="1"/><rect x="718.02" y="451.85" width="9.46" height="112.75" fill="#1a7be6"/><rect x="737.52" y="462.10" width="9.46" height="102.50" fill="#1a7be6"/><rect x="757.01" y="462.10" width="9.46" height="102.50" fill="#1a7be6"/><rect x="776.51" y="451.85" width="9.46" height="112.75" fill="#1a7be6"/><rect x="796.00" y="462.10" width="9.46" height="102.50" fill="#1a7be6"/><rect x="815.50" y="451.85" width="9.46" height="112.75" fill="#1a7be6"/><rect x="835.00" y="462.10" width="9.46" height="102.50" fill="#1a7be6"/><rect x="854.49" y="462.10" width="9.46" height="102.50" fill="#1a7be6"/><rect x="873.99" y="462.10" width="9.46" height="102.50" fill="#1a7be6"/><rect x="893.48" y="451.85" width="9.46" height="112.75" fill="#1a7be6"/><rect x="912.98" y="462.10" width="9.46" height="102.50" fill="#1a7be6"/><rect x="932.47" y="462.10" width="9.46" height="102.50" fill="#1a7be6"/><rect x="951.97" y="462.10" width="9.46" height="102.50" fill="#1a7be6"/><rect x="971.47" y="462.10" width="9.46" height="102.50" fill="#1a7be6"/><rect x="990.96" y="462.10" width="9.46" height="102.50" fill="#1a7be6"/><rect x="1010.46" y="462.10" width="9.46" height="102.50" fill="#1a7be6"/><rect x="1029.95" y="451.85" width="9.46" height="112.75" fill="#1a7be6"/><rect x="1049.45" y="462.10" width="9.46" height="102.50" fill="#1a7be6"/><rect x="1068.95" y="451.85" width="9.46" height="112.75" fill="#1a7be6"/><rect x="1088.44" y="462.10" width="9.46" height="102.50" fill="#1a7be6"/><rect x="1107.94" y="472.35" width="9.46" height="92.25" fill="#1a7be6"/><rect x="1127.43" y="441.60" width="9.46" height="123.00" fill="#1a7be6"/><rect x="1146.93" y="462.10" width="9.46" height="102.50" fill="#1a7be6"/><polyline points="722.75,498.99 742.24,545.95 761.74,523.59 781.24,498.99 800.73,545.95 820.23,498.99 839.72,545.95 859.22,523.59 878.71,523.59 898.21,498.99 917.71,545.95 937.20,523.59 956.70,523.59 976.19,523.59 995.69,523.59 1015.19,523.59 1034.68,498.99 1054.18,545.95 1073.67,498.99 1093.17,545.95 1112.66,548.19 1132.16,441.60 1151.66,564.60 1171.15,523.59" fill="none" stroke="#1ec8ac" stroke-width="1.8" stroke-linejoin="round"/></svg>
<div class="ax axl" style="left:648.0px;top:559.60px">0</div>
<div class="ax axl" style="left:648.0px;top:528.85px">0.03</div>
<div class="ax axl" style="left:648.0px;top:498.10px">0.06</div>
<div class="ax axl" style="left:648.0px;top:467.35px">0.09</div>
<div class="ax axl" style="left:648.0px;top:436.60px">0.12</div>
<div class="ax" style="left:1186.2px;top:543.19px">-10</div>
<div class="ax" style="left:1186.2px;top:518.59px">0</div>
<div class="ax" style="left:1186.2px;top:493.99px">10</div>
<div class="ax" style="left:1186.2px;top:469.39px">20</div>
<div class="ax" style="left:1186.2px;top:444.79px">30</div>
<div class="ax axc" style="left:693.75px;top:568.80px">10-21 18:00</div>
<div class="ax axc" style="left:752.24px;top:568.80px">10-21 21:00</div>
<div class="ax axc" style="left:810.72px;top:568.80px">10-22 00:00</div>
<div class="ax axc" style="left:869.21px;top:568.80px">10-22 03:00</div>
<div class="ax axc" style="left:927.70px;top:568.80px">10-22 06:00</div>
<div class="ax axc" style="left:986.19px;top:568.80px">10-22 09:00</div>
<div class="ax axc" style="left:1044.67px;top:568.80px">10-22 12:00</div>
<div class="ax axc" style="left:1103.16px;top:568.80px">10-22 15:00</div>
<div class="abs" style="left:1193px;top:280px;width:24px;height:24px;border-radius:50%;background:#e8f0fb;opacity:0.8"></div>
<div class="abs" style="left:955.5px;top:482.5px;font-size:31px;line-height:40px;letter-spacing:9.2px;color:transparent;-webkit-text-stroke:1px #888;white-space:nowrap;font-weight:300">广州云物智能</div>
</body></html>
